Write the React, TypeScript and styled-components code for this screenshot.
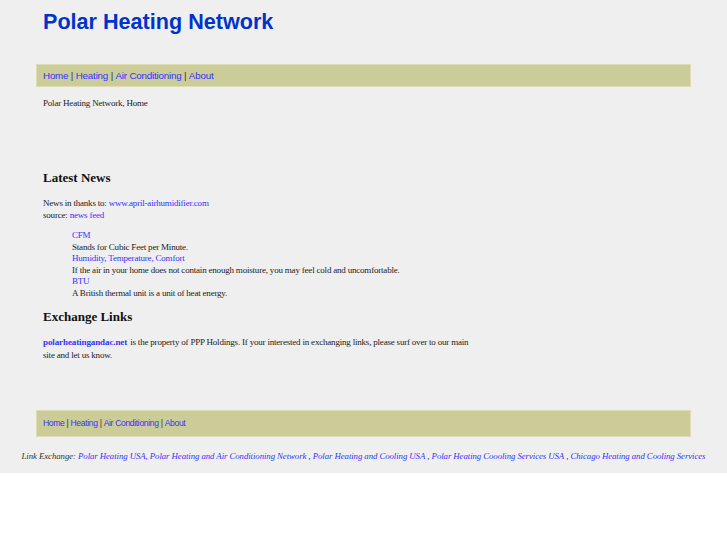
import * as React from "react";
import styled, { createGlobalStyle } from "styled-components";

const GlobalStyle = createGlobalStyle`
  html, body {
    margin: 0;
    padding: 0;
    background: #ffffff;
  }
  a {
    color: #3333ff;
    text-decoration: none;
  }
`;

const Page = styled.div`
  background: #efefef;
  height: 473px;
`;

const Container = styled.div`
  width: 655px;
  margin: 0 auto;
`;

const Header = styled.div`
  height: 64px;
  padding: 9px 7px 0;
  box-sizing: border-box;
`;

const SiteTitle = styled.h1`
  margin: 0;
  font-family: "Liberation Sans", Arial, sans-serif;
  font-size: 21.6px;
  font-weight: bold;
  color: #0033cc;
  line-height: 26px;
`;

const NavBar = styled.div<{ $small?: boolean }>`
  background: #cccc99;
  border: 1px solid #dedcb6;
  height: ${(p) => (p.$small ? "25px" : "21px")};
  display: flex;
  align-items: center;
  white-space: pre;
  padding: 0 6px;
  font-family: "Liberation Sans", Arial, sans-serif;
  font-size: ${(p) => (p.$small ? "8.6px" : "9.8px")};
  letter-spacing: ${(p) => (p.$small ? "-0.35px" : "-0.2px")};
  color: #333333;
`;

const NavLink = styled.a`
  color: #3333ff;
`;

const Content = styled.div`
  padding: 0 7px;
  font-family: "Liberation Serif", "Times New Roman", serif;
  font-size: 9px;
  letter-spacing: -0.2px;
  color: #222222;
`;

const Crumb = styled.p`
  margin: 10px 0 0;
  line-height: 12px;
`;

const SectionTitle = styled.h2<{ $top: number }>`
  margin: ${(p) => p.$top}px 0 0;
  font-family: "Liberation Serif", "Times New Roman", serif;
  font-size: 13px;
  letter-spacing: 0;
  font-weight: bold;
  color: #111111;
  line-height: 16px;
`;

const Source = styled.p`
  margin: 11px 0 0;
  line-height: 12px;
`;

const NewsList = styled.div`
  margin: 9px 0 0 29px;
  line-height: 11.6px;
`;

const NewsLink = styled.a`
  display: block;
`;

const NewsText = styled.div``;

const Blurb = styled.p`
  margin: 11px 0 0;
  width: 430px;
  line-height: 13px;
`;

const BoldLink = styled.a`
  font-weight: bold;
  letter-spacing: -0.1px;
  margin-right: 1px;
`;

const FooterWrap = styled.div`
  margin-top: 48px;
`;

const Exchange = styled.div`
  margin-top: 14px;
  text-align: center;
  font-family: "Liberation Serif", "Times New Roman", serif;
  font-style: italic;
  font-size: 8.8px;
  letter-spacing: -0.08px;
  color: #333333;
  white-space: nowrap;
`;

const navItems = ["Home", "Heating", "Air Conditioning", "About"];

const Nav = ({ small }: { small?: boolean }) => (
  <NavBar $small={small}>
    {navItems.map((item, i) => (
      <React.Fragment key={item}>
        {i > 0 && " | "}
        <NavLink href="#">{item}</NavLink>
      </React.Fragment>
    ))}
  </NavBar>
);

const news = [
  { title: "CFM", text: "Stands for Cubic Feet per Minute." },
  {
    title: "Humidity, Temperature, Comfort",
    text: "If the air in your home does not contain enough moisture, you may feel cold and uncomfortable.",
  },
  { title: "BTU", text: "A British thermal unit is a unit of heat energy." },
];

const exchangeLinks = [
  "Polar Heating USA, Polar Heating and Air Conditioning Network",
  "Polar Heating and Cooling USA",
  "Polar Heating Coooling Services USA",
  "Chicago Heating and Cooling Services",
];

const App = () => (
  <>
    <GlobalStyle />
    <Page>
      <Container>
        <Header>
          <SiteTitle>Polar Heating Network</SiteTitle>
        </Header>
        <Nav />
        <Content>
          <Crumb>Polar Heating Network, Home</Crumb>
          <SectionTitle $top={61}>Latest News</SectionTitle>
          <Source>
            News in thanks to: <a href="#">www.april-airhumidifier.com</a>
            <br />
            source: <a href="#">news feed</a>
          </Source>
          <NewsList>
            {news.map((n) => (
              <React.Fragment key={n.title}>
                <NewsLink href="#">{n.title}</NewsLink>
                <NewsText>{n.text}</NewsText>
              </React.Fragment>
            ))}
          </NewsList>
          <SectionTitle $top={9}>Exchange Links</SectionTitle>
          <Blurb>
            <BoldLink href="#">polarheatingandac.net</BoldLink> is the property
            of PPP Holdings. If your interested in exchanging links, please surf
            over to our main site and let us know.
          </Blurb>
        </Content>
        <FooterWrap>
          <Nav small />
        </FooterWrap>
      </Container>
      <Exchange>
        Link Exchange:{" "}
        {exchangeLinks.map((l, i) => (
          <React.Fragment key={l}>
            {i > 0 && <>&nbsp;, </>}
            <a href="#">{l}</a>
          </React.Fragment>
        ))}
      </Exchange>
    </Page>
  </>
);

export default App;
